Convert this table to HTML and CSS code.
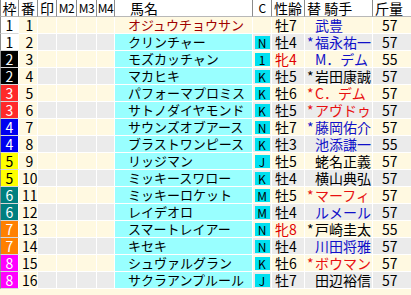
FILE: index.html
```html
<!DOCTYPE html>
<html lang="ja">
<head>
<meta charset="utf-8">
<link rel="stylesheet" href="styles.css">
</head>
<body>
<div class="race">
<div class="row head">
<div class="cell ctr">枠</div><div class="cell ctr">番</div><div class="cell ctr">印</div><div class="cell ctr lat">M2</div><div class="cell ctr lat">M3</div><div class="cell ctr lat">M4</div><div class="cell h-name">馬名</div><div class="cell ctr lat">C</div><div class="cell pad2">性齢</div><div class="cell pad2">替 騎手</div><div class="cell pad2">斤量</div>
</div>
<div class="row odd"><div class="cell waku w1">1</div><div class="cell ban">1</div><div class="cell m"></div><div class="cell m"></div><div class="cell m"></div><div class="cell m"></div><div class="cell name first">オジュウチョウサン</div><div class="cell c"></div><div class="cell sei">牡7</div><div class="cell jk blue"><span class="star"></span>武豊</div><div class="cell kin">57</div></div>
<div class="row even"><div class="cell waku w1">1</div><div class="cell ban">2</div><div class="cell m"></div><div class="cell m"></div><div class="cell m"></div><div class="cell m"></div><div class="cell name">クリンチャー</div><div class="cell c"><span class="badge">N</span></div><div class="cell sei">牡4</div><div class="cell jk blue"><span class="star">*</span>福永祐一</div><div class="cell kin">57</div></div>
<div class="row odd"><div class="cell waku w2">2</div><div class="cell ban">3</div><div class="cell m"></div><div class="cell m"></div><div class="cell m"></div><div class="cell m"></div><div class="cell name">モズカッチャン</div><div class="cell c"><span class="badge">1</span></div><div class="cell sei fem">牝4</div><div class="cell jk blue"><span class="star"></span>M．デム</div><div class="cell kin">55</div></div>
<div class="row even"><div class="cell waku w2">2</div><div class="cell ban">4</div><div class="cell m"></div><div class="cell m"></div><div class="cell m"></div><div class="cell m"></div><div class="cell name">マカヒキ</div><div class="cell c"><span class="badge">K</span></div><div class="cell sei">牡5</div><div class="cell jk"><span class="star">*</span>岩田康誠</div><div class="cell kin">57</div></div>
<div class="row odd"><div class="cell waku w3">3</div><div class="cell ban">5</div><div class="cell m"></div><div class="cell m"></div><div class="cell m"></div><div class="cell m"></div><div class="cell name">パフォーマプロミス</div><div class="cell c"><span class="badge">K</span></div><div class="cell sei">牡6</div><div class="cell jk red"><span class="star">*</span>C．デム</div><div class="cell kin">57</div></div>
<div class="row even"><div class="cell waku w3">3</div><div class="cell ban">6</div><div class="cell m"></div><div class="cell m"></div><div class="cell m"></div><div class="cell m"></div><div class="cell name">サトノダイヤモンド</div><div class="cell c"><span class="badge">K</span></div><div class="cell sei">牡5</div><div class="cell jk red"><span class="star">*</span>アヴドゥ</div><div class="cell kin">57</div></div>
<div class="row odd"><div class="cell waku w4">4</div><div class="cell ban">7</div><div class="cell m"></div><div class="cell m"></div><div class="cell m"></div><div class="cell m"></div><div class="cell name">サウンズオブアース</div><div class="cell c"><span class="badge">N</span></div><div class="cell sei">牡7</div><div class="cell jk blue"><span class="star">*</span>藤岡佑介</div><div class="cell kin">57</div></div>
<div class="row even"><div class="cell waku w4">4</div><div class="cell ban">8</div><div class="cell m"></div><div class="cell m"></div><div class="cell m"></div><div class="cell m"></div><div class="cell name">ブラストワンピース</div><div class="cell c"><span class="badge">K</span></div><div class="cell sei">牡3</div><div class="cell jk blue"><span class="star"></span>池添謙一</div><div class="cell kin">55</div></div>
<div class="row odd"><div class="cell waku w5">5</div><div class="cell ban">9</div><div class="cell m"></div><div class="cell m"></div><div class="cell m"></div><div class="cell m"></div><div class="cell name">リッジマン</div><div class="cell c"><span class="badge">J</span></div><div class="cell sei">牡5</div><div class="cell jk"><span class="star"></span>蛯名正義</div><div class="cell kin">57</div></div>
<div class="row even"><div class="cell waku w5">5</div><div class="cell ban">10</div><div class="cell m"></div><div class="cell m"></div><div class="cell m"></div><div class="cell m"></div><div class="cell name">ミッキースワロー</div><div class="cell c"><span class="badge">K</span></div><div class="cell sei">牡4</div><div class="cell jk"><span class="star"></span>横山典弘</div><div class="cell kin">57</div></div>
<div class="row odd"><div class="cell waku w6">6</div><div class="cell ban">11</div><div class="cell m"></div><div class="cell m"></div><div class="cell m"></div><div class="cell m"></div><div class="cell name">ミッキーロケット</div><div class="cell c"><span class="badge">M</span></div><div class="cell sei">牡5</div><div class="cell jk red"><span class="star">*</span>マーフィ</div><div class="cell kin">57</div></div>
<div class="row even"><div class="cell waku w6">6</div><div class="cell ban">12</div><div class="cell m"></div><div class="cell m"></div><div class="cell m"></div><div class="cell m"></div><div class="cell name">レイデオロ</div><div class="cell c"><span class="badge">M</span></div><div class="cell sei">牡4</div><div class="cell jk blue"><span class="star"></span>ルメール</div><div class="cell kin">57</div></div>
<div class="row odd"><div class="cell waku w7">7</div><div class="cell ban">13</div><div class="cell m"></div><div class="cell m"></div><div class="cell m"></div><div class="cell m"></div><div class="cell name">スマートレイアー</div><div class="cell c"><span class="badge">N</span></div><div class="cell sei fem">牝8</div><div class="cell jk"><span class="star">*</span>戸崎圭太</div><div class="cell kin">55</div></div>
<div class="row even"><div class="cell waku w7">7</div><div class="cell ban">14</div><div class="cell m"></div><div class="cell m"></div><div class="cell m"></div><div class="cell m"></div><div class="cell name">キセキ</div><div class="cell c"><span class="badge">N</span></div><div class="cell sei">牡4</div><div class="cell jk blue"><span class="star"></span>川田将雅</div><div class="cell kin">57</div></div>
<div class="row odd"><div class="cell waku w8">8</div><div class="cell ban">15</div><div class="cell m"></div><div class="cell m"></div><div class="cell m"></div><div class="cell m"></div><div class="cell name">シュヴァルグラン</div><div class="cell c"><span class="badge">K</span></div><div class="cell sei">牡6</div><div class="cell jk red"><span class="star">*</span>ボウマン</div><div class="cell kin">57</div></div>
<div class="row even"><div class="cell waku w8">8</div><div class="cell ban">16</div><div class="cell m"></div><div class="cell m"></div><div class="cell m"></div><div class="cell m"></div><div class="cell name">サクラアンプルール</div><div class="cell c"><span class="badge">J</span></div><div class="cell sei">牡7</div><div class="cell jk"><span class="star"></span>田辺裕信</div><div class="cell kin">57</div></div>
</div>
</body>
</html>
```

FILE: styles.css
```css
html, body {
  margin: 0;
  padding: 0;
  background: #fff9e1;
}
body {
  font-family: "Noto Sans CJK JP", "DejaVu Sans", sans-serif;
  color: #000;
  width: 411px;
  height: 295px;
  overflow: hidden;
}
.race {
  display: flex;
  flex-direction: column;
  width: 411px;
}
.row {
  display: grid;
  grid-template-columns: 19px 19px 19px 20px 20px 18px 138px 19px 33px 68px 38px;
  height: 17px;
}
.cell {
  box-sizing: border-box;
  height: 17px;
  white-space: nowrap;
  border-right: 1px solid #fff;
  border-bottom: 1px solid #fff;
  line-height: 16px;
  font-size: 14px;
}
.cell:last-child { border-right: none; }

.head .cell {
  background: #fff;
  border-right-color: #8c8c8c;
  border-bottom-color: #b8b8b8;
  font-size: 14px;
  line-height: 16px;
}
.head .cell:first-child { border-left: 1px solid #8c8c8c; }
.head .cell:last-child { border-right: none; }
.ctr { text-align: center; }
.head .lat { font-size: 12px; letter-spacing: -0.5px; }
.h-name { padding-left: 15px; }
.pad2 { padding-left: 2px; }

.odd .cell { background: #fff9e1; }
.even .cell { background: #ebebeb; }

.row .waku {
  text-align: center;
  color: #fff;
  border-left: 1px solid #8c8c8c;
  border-bottom-color: #d8d8d8;
}
.row .w1 { background: #fff; color: #000; }
.row .w2 { background: #000; }
.row .w3 { background: #ff2a2a; }
.row .w4 { background: #0000f0; }
.row .w5 { background: #ffff00; color: #000; }
.row .w6 { background: #007f7f; }
.row .w7 { background: #ff8000; }
.row .w8 { background: #ff00ff; }

.row .ban {
  background: #fff9e1;
  text-align: center;
  padding-left: 3px;
}
.row .name {
  background: #99ffff;
  font-size: 13px;
  padding-left: 13px;
}
.row .name.first {
  background: #fff9e1;
  color: #a00000;
}
.c {
  display: flex;
  align-items: center;
  justify-content: center;
}
.badge {
  display: block;
  width: 15px;
  height: 13px;
  line-height: 13px;
  font-size: 12px;
  background: #00e0f0;
  color: #000;
  text-align: center;
}
.sei { padding-left: 3px; }
.sei.fem { color: #e00000; }
.jk { padding-left: 2px; }
.jk.blue { color: #1010c8; }
.jk.red { color: #e81010; }
.star {
  display: inline-block;
  width: 8px;
}
.kin { padding-left: 9px; }
```
